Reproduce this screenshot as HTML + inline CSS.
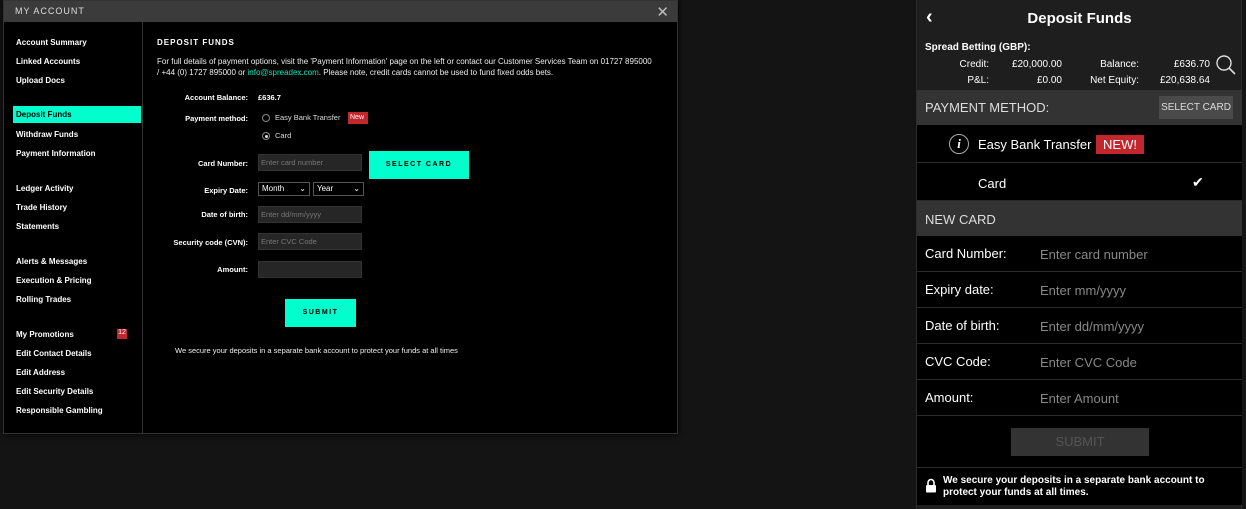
<!DOCTYPE html>
<html><head><meta charset="utf-8"><style>
*{box-sizing:border-box;margin:0;padding:0}
body{width:1246px;height:509px;background:#141414;font-family:"Liberation Sans",sans-serif;position:relative;overflow:hidden;color:#fff}
.a{position:absolute}
#modal{left:3px;top:0;width:675px;height:434px;background:#000;border:1px solid #333;box-shadow:0 0 6px #000}
#mh{left:0;top:0;width:673px;height:21px;background:#3b3b3b;color:#ddd;font-size:9px;letter-spacing:1px;padding:5px 0 0 11px}
.nav{left:9px;font-size:8px;font-weight:bold;color:#fff;height:17px;width:128px;padding:4px 0 0 3px}
.lbl{font-size:7.5px;font-weight:bold;text-align:right;width:100px;left:144px}
.inp{left:254px;width:104px;height:17px;background:#262626;border:1px solid #333;color:#777;font-size:7.5px;padding:3px 2px}
.sel{height:14px;background:#000;border:1px solid #555;color:#fff;font-size:8px;padding:1px 3px;display:flex;justify-content:space-between}
.teal{background:#00ffcc;color:#000;font-weight:bold;font-size:7px;letter-spacing:1.5px;text-align:center}
#rp{left:916px;top:0;width:326px;height:509px;background:#1e1e1e;border-left:1px solid #2c2c2c;border-right:1px solid #2c2c2c}
.row{left:0;width:325px;height:36px;background:#000;border-bottom:1px solid #2a2a2a;font-size:13px}
.row .l{position:absolute;left:8px;top:10px;color:#fff}
.row .p{position:absolute;left:123px;top:11px;color:#888}
.sec{left:0;width:325px;background:#333;font-size:13px;color:#ddd}
</style></head><body>
<div class="a" id="modal">
<div class="a" id="mh">MY ACCOUNT</div>
<div class="a" style="right:8px;top:2px;font-size:15px;color:#bbb">✕</div>
<div class="a" style="left:138px;top:21px;width:1px;height:412px;background:#333"></div>
<div class="a nav" style="top:33px">Account Summary</div>
<div class="a nav" style="top:52px">Linked Accounts</div>
<div class="a nav" style="top:71px">Upload Docs</div>
<div class="a nav" style="top:105px;background:#00ffcc;color:#000">Deposit Funds</div>
<div class="a nav" style="top:125px">Withdraw Funds</div>
<div class="a nav" style="top:144px">Payment Information</div>
<div class="a nav" style="top:179px">Ledger Activity</div>
<div class="a nav" style="top:198px">Trade History</div>
<div class="a nav" style="top:217px">Statements</div>
<div class="a nav" style="top:252px">Alerts &amp; Messages</div>
<div class="a nav" style="top:271px">Execution &amp; Pricing</div>
<div class="a nav" style="top:290px">Rolling Trades</div>
<div class="a nav" style="top:325px">My Promotions</div>
<div class="a" style="left:113px;top:328px;width:10px;height:10px;background:#c1272d;font-size:7px;text-align:center;color:#fff">12</div>
<div class="a nav" style="top:344px">Edit Contact Details</div>
<div class="a nav" style="top:363px">Edit Address</div>
<div class="a nav" style="top:382px">Edit Security Details</div>
<div class="a nav" style="top:401px">Responsible Gambling</div>

<div class="a" style="left:153px;top:37px;font-size:8px;font-weight:bold;letter-spacing:1px">DEPOSIT FUNDS</div>
<div class="a" style="left:153px;top:55px;width:516px;font-size:8px;line-height:11px;color:#eee">For full details of payment options, visit the 'Payment Information' page on the left or contact our Customer Services Team on 01727 895000<br>/ +44 (0) 1727 895000 or <span style="color:#00e6b8">info@spreadex.com</span>. Please note, credit cards cannot be used to fund fixed odds bets.</div>
<div class="a lbl" style="top:92px">Account Balance:</div>
<div class="a" style="left:254px;top:92px;font-size:7.5px;font-weight:bold">£636.7</div>
<div class="a lbl" style="top:113px">Payment method:</div>
<div class="a" style="left:258px;top:113px;width:8px;height:8px;border:1px solid #888;border-radius:50%"></div>
<div class="a" style="left:271px;top:112px;font-size:7.5px;color:#ddd">Easy Bank Transfer</div>
<div class="a" style="left:344px;top:111px;width:20px;height:12px;background:#c1272d;font-size:7px;padding:2px 2px">New</div>
<div class="a" style="left:258px;top:131px;width:8px;height:8px;border:1px solid #888;border-radius:50%"><div style="margin:1.5px;width:3px;height:3px;background:#ddd;border-radius:50%"></div></div>
<div class="a" style="left:271px;top:130px;font-size:7.5px;color:#ddd">Card</div>
<div class="a lbl" style="top:158px">Card Number:</div>
<div class="a inp" style="top:153px">Enter card number</div>
<div class="a teal" style="left:365px;top:150px;width:100px;height:28px;padding-top:10px">SELECT CARD</div>
<div class="a lbl" style="top:185px">Expiry Date:</div>
<div class="a sel" style="left:254px;top:181px;width:52px"><span>Month</span><span>⌄</span></div>
<div class="a sel" style="left:309px;top:181px;width:51px"><span>Year</span><span>⌄</span></div>
<div class="a lbl" style="top:209px">Date of birth:</div>
<div class="a inp" style="top:205px">Enter dd/mm/yyyy</div>
<div class="a lbl" style="top:237px">Security code (CVN):</div>
<div class="a inp" style="top:232px">Enter CVC Code</div>
<div class="a lbl" style="top:264px">Amount:</div>
<div class="a inp" style="top:260px"></div>
<div class="a teal" style="left:281px;top:298px;width:71px;height:28px;padding-top:10px">SUBMIT</div>
<div class="a" style="left:171px;top:345px;font-size:7.5px;color:#eee">We secure your deposits in a separate bank account to protect your funds at all times</div>
</div>

<div class="a" id="rp">
<div class="a" style="left:9px;top:6px;font-size:20px;font-weight:bold">‹</div>
<div class="a" style="left:0;width:325px;top:10px;text-align:center;font-size:15px;font-weight:bold">Deposit Funds</div>
<div class="a" style="left:8px;top:42px;font-size:10px;font-weight:bold">Spread Betting (GBP):</div>
<div class="a" style="left:8px;top:57px;font-size:10px;line-height:16px;width:280px">
<div class="a" style="left:0;width:64px;text-align:right">Credit:<br>P&amp;L:</div>
<div class="a" style="left:70px;width:67px;text-align:right">£20,000.00<br>£0.00</div>
<div class="a" style="left:140px;width:74px;text-align:right">Balance:<br>Net Equity:</div>
<div class="a" style="left:218px;width:67px;text-align:right">£636.70<br>£20,638.64</div>
</div>
<svg class="a" style="left:298px;top:54px" width="22" height="22" viewBox="0 0 22 22"><circle cx="9" cy="9" r="7" fill="none" stroke="#ddd" stroke-width="1.4"/><line x1="14" y1="14" x2="20" y2="20" stroke="#ddd" stroke-width="1.6"/></svg>
<div class="a sec" style="top:90px;height:35px;padding:10px 8px">PAYMENT METHOD:</div>
<div class="a" style="left:242px;top:96px;width:74px;height:23px;background:#4a4a4a;font-size:10px;color:#ddd;text-align:center;padding-top:6px">SELECT CARD</div>
<div class="a row" style="top:125px;height:38px">
<div class="a" style="left:32px;top:9px;width:20px;height:20px;border:1px solid #aaa;border-radius:50%;font-family:'Liberation Serif',serif;font-style:italic;font-weight:bold;font-size:13px;text-align:center;line-height:18px">i</div>
<div class="a" style="left:61px;top:12px;color:#fff">Easy Bank Transfer</div>
<div class="a" style="left:179px;top:10px;width:48px;height:19px;background:#c1272d;color:#fff;text-align:center;padding-top:2px">NEW!</div>
</div>
<div class="a row" style="top:163px;height:38px"><div class="a" style="left:61px;top:13px">Card</div><div class="a" style="left:275px;top:11px;font-size:14px">✔</div></div>
<div class="a sec" style="top:201px;height:35px;padding:11px 8px">NEW CARD</div>
<div class="a row" style="top:236px"><span class="l">Card Number:</span><span class="p">Enter card number</span></div>
<div class="a row" style="top:272px"><span class="l">Expiry date:</span><span class="p">Enter mm/yyyy</span></div>
<div class="a row" style="top:308px"><span class="l">Date of birth:</span><span class="p">Enter dd/mm/yyyy</span></div>
<div class="a row" style="top:344px"><span class="l">CVC Code:</span><span class="p">Enter CVC Code</span></div>
<div class="a row" style="top:380px"><span class="l">Amount:</span><span class="p">Enter Amount</span></div>
<div class="a row" style="top:416px;height:52px"><div class="a" style="left:94px;top:12px;width:138px;height:28px;background:#333;color:#555;text-align:center;padding-top:6px;font-size:13px">SUBMIT</div></div>
<div class="a" style="left:0;top:468px;width:325px;height:37px;background:#000">
<svg class="a" style="left:8px;top:10px" width="12" height="15" viewBox="0 0 12 15"><path d="M3 7V4.5a3 3 0 0 1 6 0V7" fill="none" stroke="#fff" stroke-width="1.6"/><rect x="1" y="7" width="10" height="7.5" rx="1" fill="#fff"/></svg>
<div class="a" style="left:26px;top:7px;font-size:10px;font-weight:bold;line-height:12px;width:290px">We secure your deposits in a separate bank account to protect your funds at all times.</div>
</div>
</div>
</body></html>
